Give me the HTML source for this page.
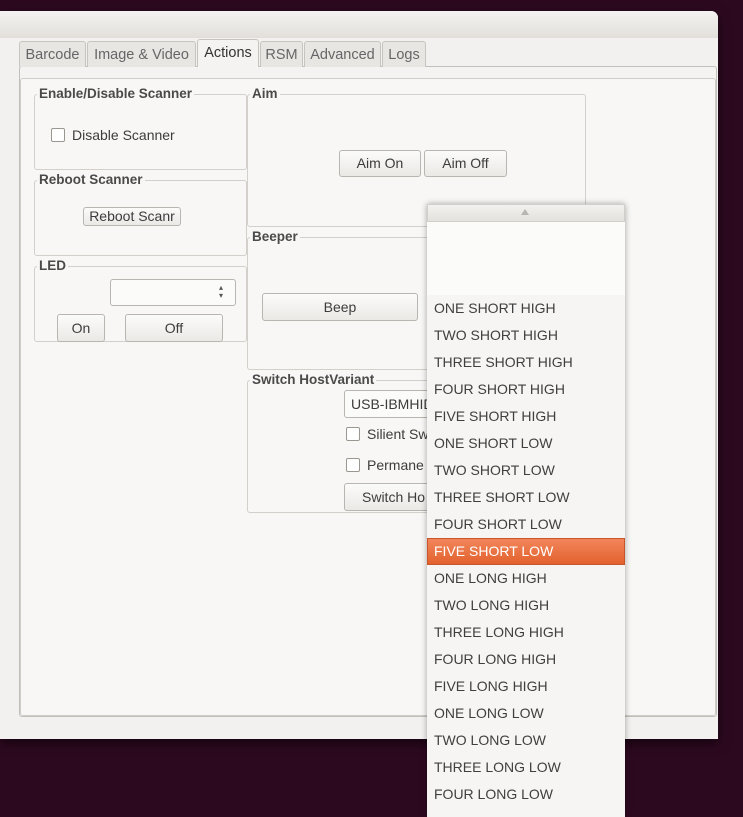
<!DOCTYPE html>
<html><head><meta charset="utf-8"><style>
*{box-sizing:border-box;margin:0;padding:0}
body{width:743px;height:817px;background:#2d0920;position:relative;overflow:hidden;font-family:"Liberation Sans","DejaVu Sans",sans-serif;font-size:14px;color:#3c3c3c}
.a{position:absolute}
.win{left:0;top:11px;width:718px;height:728px;background:#f2f1f0;border-radius:0 7px 0 0;box-shadow:0 4px 12px rgba(0,0,0,.6)}
.title{left:0;top:11px;width:718px;height:27px;background:linear-gradient(#f4f3f1,#e2dfdb);border-radius:0 7px 0 0}
.tab{top:41px;height:26px;background:#e8e6e3;border:1px solid #c8c5c0;border-bottom:none;border-radius:3px 3px 0 0;color:#666;font-size:14.5px;line-height:27px;text-align:center}
.panel{left:19px;top:66px;width:698px;height:651px;border:1px solid #c3c0bb;border-radius:3px;background:#f4f3f1}
.inner{left:20px;top:78px;width:696px;height:638px;border:1px solid #d0cdc8;border-radius:3px;background:#f8f7f6}
.grp{border:1px solid #d3d0cb;border-radius:3px}
.gt{font-weight:bold;font-size:13.5px;color:#4a4a4a;background:#f8f7f6;padding:0 2px;line-height:14px}
.btn{border:1px solid #b9b5b0;border-radius:3px;background:linear-gradient(#fbfbfa,#ebe9e6);text-align:center;color:#3c3c3c;font-size:14px;white-space:nowrap;overflow:hidden}
.cb{width:14px;height:14px;border:1px solid #9a9690;border-radius:2px;background:#fff}
.menu{left:427px;top:204px;width:198px;height:613px;background:#f6f5f4;box-shadow:0 0 6px rgba(0,0,0,.35)}
.it{left:7px;font-size:14px;color:#3f3f3f;height:27px;line-height:27px;white-space:nowrap}
</style></head><body>
<div class="a win"></div>
<div class="a title"></div>
<div class="a panel"></div>
<div class="a tab" style="left:19px;width:67px">Barcode</div>
<div class="a tab" style="left:87px;width:109px">Image &amp; Video</div>
<div class="a tab" style="left:197px;top:39px;height:28px;width:62px;background:#f4f3f1;color:#333">Actions</div>
<div class="a tab" style="left:260px;width:43px">RSM</div>
<div class="a tab" style="left:304px;width:77px">Advanced</div>
<div class="a tab" style="left:382px;width:44px">Logs</div>
<div class="a inner"></div>

<div class="a grp" style="left:34px;top:94px;width:213px;height:76px"></div>
<div class="a gt" style="left:37px;top:87px">Enable/Disable Scanner</div>
<div class="a cb" style="left:51px;top:128px"></div>
<div class="a" style="left:72px;top:127px">Disable Scanner</div>

<div class="a grp" style="left:34px;top:180px;width:213px;height:76px"></div>
<div class="a gt" style="left:37px;top:173px">Reboot Scanner</div>
<div class="a btn" style="left:83px;top:207px;width:98px;height:19px;line-height:17px">Reboot Scanr</div>

<div class="a grp" style="left:34px;top:266px;width:213px;height:76px"></div>
<div class="a gt" style="left:37px;top:259px">LED</div>
<div class="a btn" style="left:110px;top:279px;width:126px;height:27px;background:#fbfbfa"></div>
<div class="a" style="left:219px;top:284px;font-size:8px;line-height:8px;color:#555">▴<br>▾</div>
<div class="a btn" style="left:57px;top:314px;width:48px;height:28px;line-height:26px">On</div>
<div class="a btn" style="left:125px;top:314px;width:98px;height:28px;line-height:26px">Off</div>

<div class="a grp" style="left:247px;top:94px;width:339px;height:133px"></div>
<div class="a gt" style="left:250px;top:87px">Aim</div>
<div class="a btn" style="left:339px;top:150px;width:82px;height:27px;line-height:25px">Aim On</div>
<div class="a btn" style="left:424px;top:150px;width:83px;height:27px;line-height:25px">Aim Off</div>

<div class="a grp" style="left:247px;top:237px;width:200px;height:133px"></div>
<div class="a gt" style="left:250px;top:230px">Beeper</div>
<div class="a btn" style="left:262px;top:293px;width:156px;height:28px;line-height:26px">Beep</div>

<div class="a grp" style="left:247px;top:380px;width:200px;height:133px"></div>
<div class="a gt" style="left:250px;top:373px">Switch HostVariant</div>
<div class="a btn" style="left:344px;top:390px;width:90px;height:28px;line-height:26px;text-align:left;padding-left:6px;background:#fbfbfa">USB-IBMHID</div>
<div class="a cb" style="left:346px;top:427px"></div>
<div class="a" style="left:367px;top:426px">Silient Sw</div>
<div class="a cb" style="left:346px;top:458px"></div>
<div class="a" style="left:367px;top:457px">Permane</div>
<div class="a btn" style="left:344px;top:483px;width:90px;height:28px;line-height:26px;text-align:left;padding-left:17px">Switch Ho</div>

<div class="a menu">
 <div class="a" style="left:0;top:0;width:198px;height:18px;background:linear-gradient(#f2f1ef,#e4e2df);border:1px solid #d2cfca"></div>
 <div class="a" style="left:94px;top:5px;width:0;height:0;border-left:4px solid transparent;border-right:4px solid transparent;border-bottom:6px solid #b8b5b0"></div>
 <div class="a" style="left:0;top:18px;width:198px;height:73px;background:#fbfbfa"></div>
 <div class="a" style="left:0;top:334px;width:198px;height:27px;background:linear-gradient(#f2855a,#e2622e);border:1px solid #c9562a"></div>
 <div class="a it" style="top:91px">ONE SHORT HIGH</div>
 <div class="a it" style="top:118px">TWO SHORT HIGH</div>
 <div class="a it" style="top:145px">THREE SHORT HIGH</div>
 <div class="a it" style="top:172px">FOUR SHORT HIGH</div>
 <div class="a it" style="top:199px">FIVE SHORT HIGH</div>
 <div class="a it" style="top:226px">ONE SHORT LOW</div>
 <div class="a it" style="top:253px">TWO SHORT LOW</div>
 <div class="a it" style="top:280px">THREE SHORT LOW</div>
 <div class="a it" style="top:307px">FOUR SHORT LOW</div>
 <div class="a it" style="top:334px;color:#fff">FIVE SHORT LOW</div>
 <div class="a it" style="top:361px">ONE LONG HIGH</div>
 <div class="a it" style="top:388px">TWO LONG HIGH</div>
 <div class="a it" style="top:415px">THREE LONG HIGH</div>
 <div class="a it" style="top:442px">FOUR LONG HIGH</div>
 <div class="a it" style="top:469px">FIVE LONG HIGH</div>
 <div class="a it" style="top:496px">ONE LONG LOW</div>
 <div class="a it" style="top:523px">TWO LONG LOW</div>
 <div class="a it" style="top:550px">THREE LONG LOW</div>
 <div class="a it" style="top:577px">FOUR LONG LOW</div>
</div>
</body></html>
